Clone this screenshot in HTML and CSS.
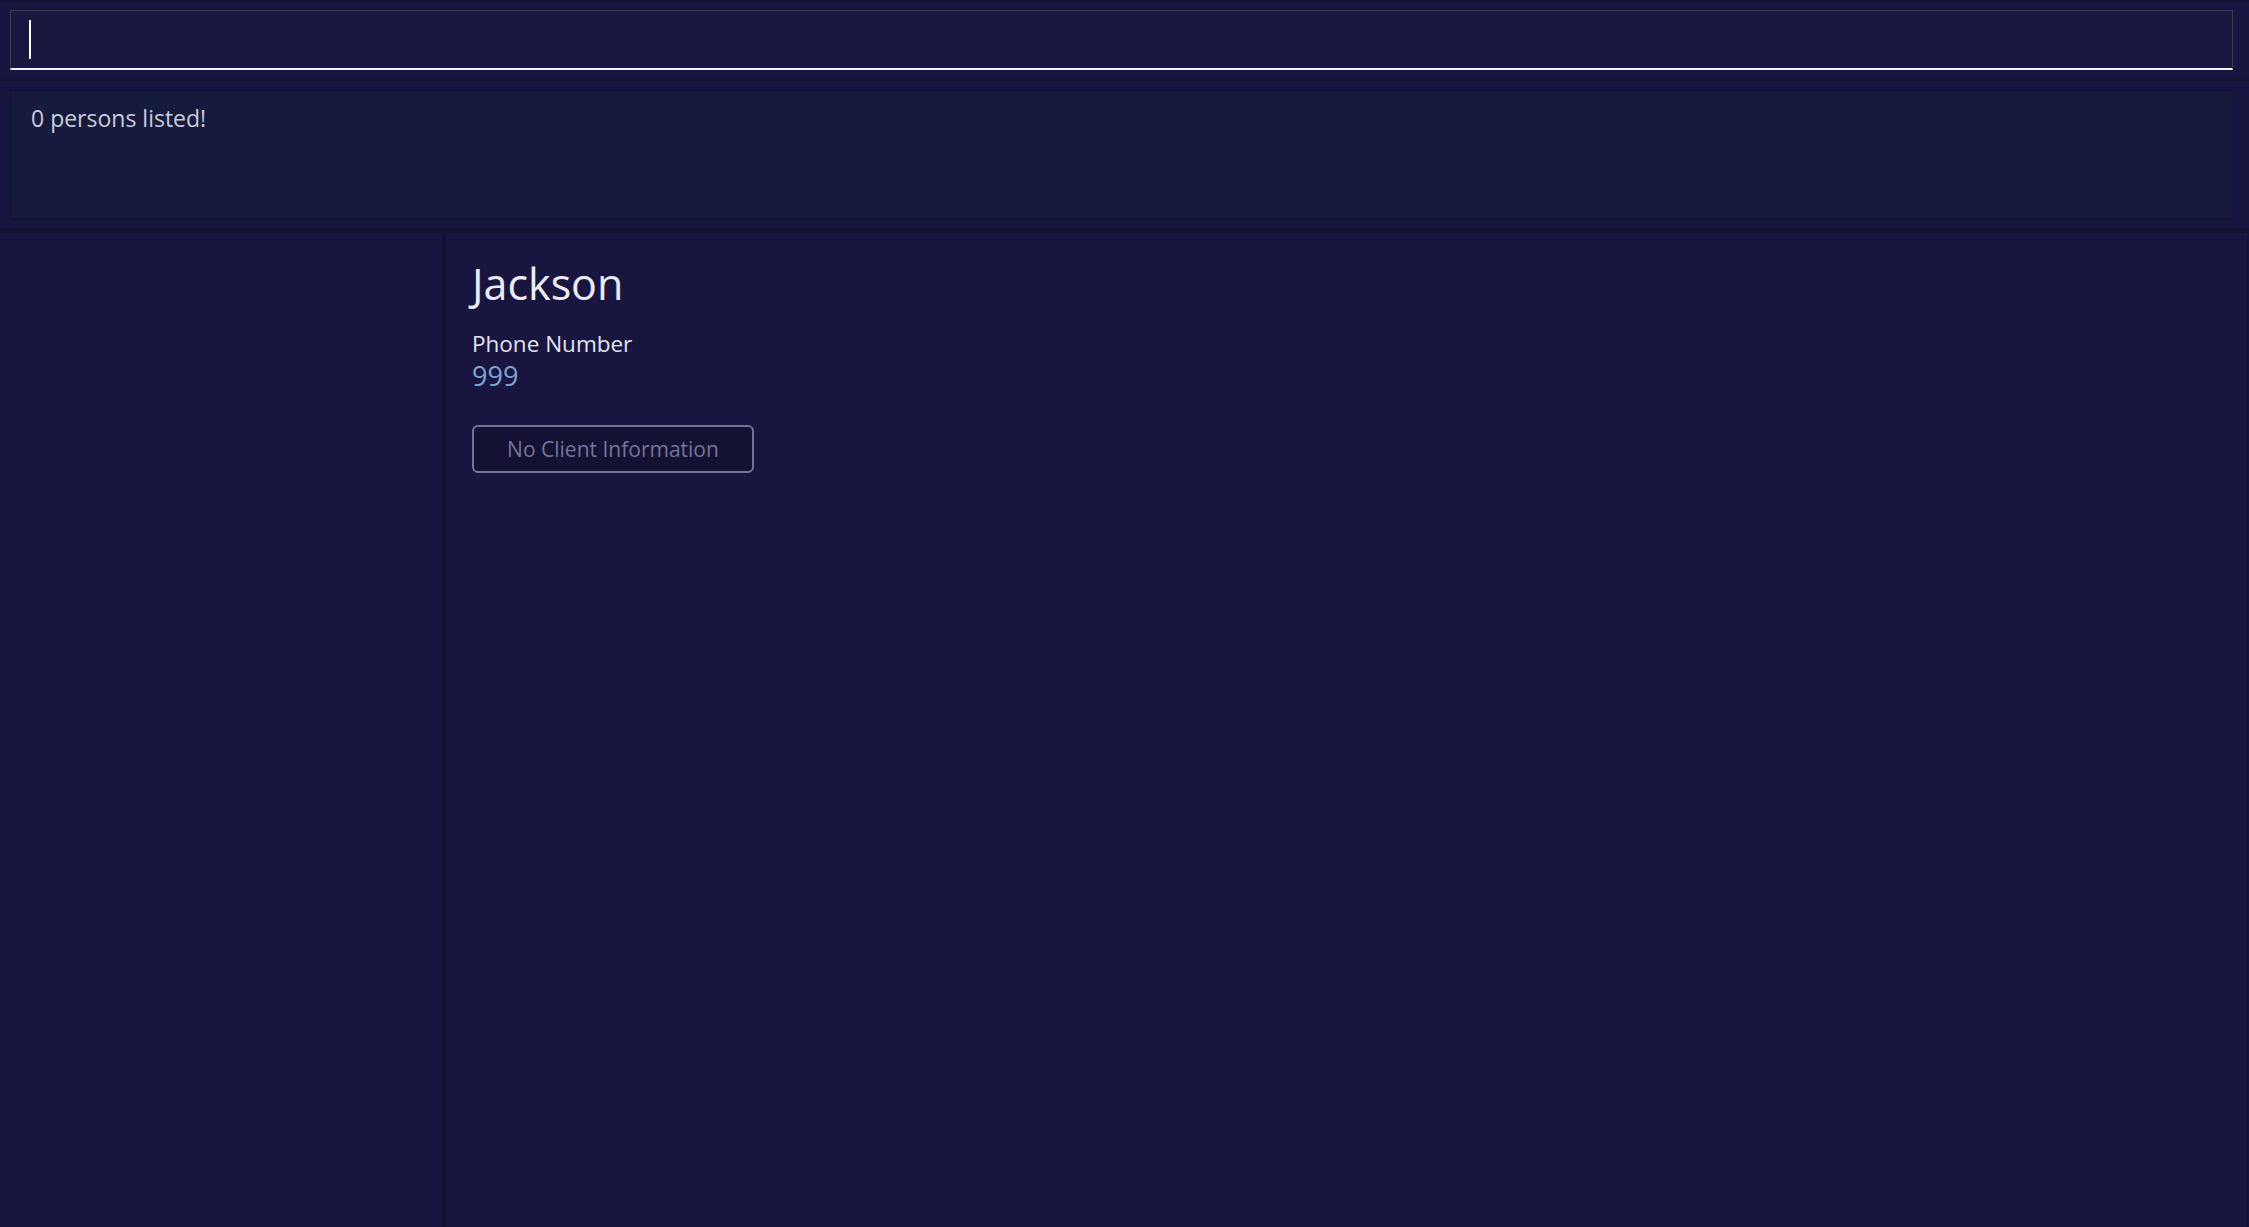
FILE: index.html
```html
<!DOCTYPE html>
<html lang="en">
<head>
<meta charset="utf-8">
<title>Address Book</title>
<link rel="stylesheet" href="styles.css">
</head>
<body>
<div class="app">
  <div class="command-section">
    <div class="command-box"><span class="caret"></span></div>
  </div>
  <div class="result-section">
    <div class="result-box"><div class="result-text">0 persons listed!</div></div>
  </div>
  <div class="main">
    <div class="list-panel"></div>
    <div class="divider"></div>
    <div class="detail-panel">
      <div class="name">Jackson</div>
      <div class="label">Phone Number</div>
      <div class="value">999</div>
      <button class="info-btn">No Client Information</button>
    </div>
  </div>
</div>
</body>
</html>
```
FILE: styles.css
```css
html, body {
  margin: 0;
  padding: 0;
  height: 100%;
}
body {
  background: #181640;
  font-family: "Open Sans", "Noto Sans", sans-serif;
  overflow: hidden;
}
.app {
  display: flex;
  flex-direction: column;
  height: 100vh;
  border-top: 3px solid #141335;
  box-sizing: border-box;
}
.command-section {
  padding: 7px 16px 8px 10px;
  border-bottom: 3px solid #131232;
}
.command-box {
  height: 57px;
  border: 1.5px solid #3c3b47;
  border-bottom: 2px solid #f2f2f6;
  background: #191840;
  display: flex;
  align-items: center;
  padding-left: 18px;
}
.caret {
  width: 1.5px;
  height: 39px;
  background: #ffffff;
}
.result-section {
  padding: 8px 16px 8px 10px;
  border-bottom: 5px solid #131232;
}
.result-box {
  border: 2px solid #131436;
  background: #161b3d;
  padding: 15px 0 0 19px;
  box-sizing: border-box;
  height: 131px;
}
.result-text {
  color: #c9cbd9;
  font-size: 23px;
  line-height: 1;
  padding-top: 1px;
}
.main {
  flex: 1;
  display: flex;
}
.list-panel {
  width: 442px;
  background: #181640;
}
.divider {
  width: 4px;
  background: #121131;
}
.detail-panel {
  flex: 1;
  background: #181640;
  border-right: 2px solid #141334;
  padding: 29px 0 0 26px;
  display: flex;
  flex-direction: column;
  align-items: flex-start;
}
.name {
  color: #ecebf3;
  font-size: 43px;
  line-height: 1;
}
.label {
  margin-top: 28px;
  color: #e4e4ec;
  font-size: 22.5px;
  line-height: 1;
}
.value {
  margin-top: 6px;
  color: #7ea6cc;
  font-size: 27px;
  line-height: 1;
}
.info-btn {
  margin-top: 36px;
  width: 282px;
  height: 48px;
  border: 2.5px solid #757398;
  border-radius: 6px;
  background: #131232;
  color: #74749c;
  font-family: "Open Sans", "Noto Sans", sans-serif;
  font-size: 21px;
  padding: 0;
}
```
